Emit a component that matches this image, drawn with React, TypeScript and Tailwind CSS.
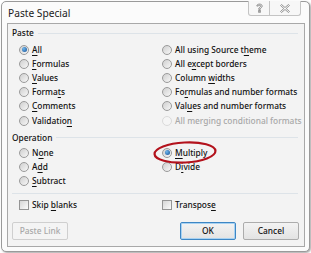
import React from 'react';

type Opt = { label: string; key: number; checked?: boolean; disabled?: boolean };

const pasteLeft: Opt[] = [
  { label: 'All', key: 0, checked: true },
  { label: 'Formulas', key: 0 },
  { label: 'Values', key: 0 },
  { label: 'Formats', key: 5 },
  { label: 'Comments', key: 0 },
  { label: 'Validation', key: 9 },
];

const pasteRight: Opt[] = [
  { label: 'All using Source theme', key: 18 },
  { label: 'All except borders', key: 5 },
  { label: 'Column widths', key: 7 },
  { label: 'Formulas and number formats', key: 2 },
  { label: 'Values and number formats', key: 3 },
  { label: 'All merging conditional formats', key: -1, disabled: true },
];

const opLeft: Opt[] = [
  { label: 'None', key: 1 },
  { label: 'Add', key: 1 },
  { label: 'Subtract', key: 0 },
];

const opRight: Opt[] = [
  { label: 'Multiply', key: 0, checked: true },
  { label: 'Divide', key: 1 },
];

function Label({ text, k }: { text: string; k: number }) {
  if (k < 0) return <span className="whitespace-nowrap">{text}</span>;
  return (
    <span className="whitespace-nowrap">
      {text.slice(0, k)}
      <span className="underline underline-offset-[2px]">{text[k]}</span>
      {text.slice(k + 1)}
    </span>
  );
}

function Radio({ checked, disabled }: { checked?: boolean; disabled?: boolean }) {
  return (
    <span
      className={
        disabled
          ? 'flex h-[10px] w-[10px] shrink-0 items-center justify-center rounded-full border border-[#dadada] bg-[#f5f5f5]'
          : 'flex h-[10px] w-[10px] shrink-0 items-center justify-center rounded-full border border-[#9a9a9a] bg-gradient-to-br from-[#cfcfcf] to-[#f7f7f7]'
      }
    >
      {checked && (
        <span className="h-[5px] w-[5px] rounded-full bg-[radial-gradient(circle_at_35%_35%,#6fb6ec,#134f95)]" />
      )}
    </span>
  );
}

function RadioRow({ opt, h = 'h-[14.2px]' }: { opt: Opt; h?: string }) {
  return (
    <div className={`flex items-center gap-[3px] ${h} ${opt.disabled ? 'text-[#a8a8a8]' : 'text-[#111]'}`}>
      <Radio checked={opt.checked} disabled={opt.disabled} />
      <Label text={opt.label} k={opt.key} />
    </div>
  );
}

function Check({ label, k }: { label: string; k: number }) {
  return (
    <div className="flex h-[14px] items-center gap-[3px]">
      <span className="h-[10px] w-[10px] shrink-0 border border-[#959595] bg-gradient-to-br from-[#d6d6d6] to-[#fbfbfb]" />
      <Label text={label} k={k} />
    </div>
  );
}

function GroupHeader({ title }: { title: string }) {
  return (
    <div className="flex h-[16px] items-center gap-[4px] pl-[4px] pr-[6px]">
      <span>{title}</span>
      <span className="h-px flex-1 bg-[#dde3e8]" />
    </div>
  );
}

export default function App() {
  return (
    <div className="relative h-[253px] w-[311px] bg-white text-[8.35px] font-medium leading-[14px] text-[#111] [font-family:'Noto_Sans','Open_Sans',sans-serif]">
      <div className="absolute left-[1px] top-[1px] flex h-[251px] w-[309px] flex-col rounded-[5px] border border-[#9a9a9a] bg-[#fbfbfb] pb-[4px] pl-[5px] pr-[4px] shadow-[1px_1px_2px_rgba(0,0,0,0.35)]">
        {/* title bar */}
        <div className="relative flex h-[21px] shrink-0 items-center pl-[1px] text-[10.2px] font-normal">
          <span className="text-[#222]">Paste Special</span>
          <div className="absolute right-[4px] top-[-1px] flex h-[15px] rounded-b-[3px] border border-t-0 border-[#c4c4c4] bg-[#f7f7f7]">
            <div className="flex w-[21px] items-center justify-center border-r border-[#c4c4c4]">
              <svg width="7" height="10" viewBox="0 0 7 10" fill="none" stroke="#8a8a8a" strokeWidth="1">
                <path d="M0.8 3 C0.8 0.5 6.2 0.5 6.2 3 C6.2 4.6 4.3 4.7 4.3 6.3 L2.7 6.3 C2.7 4.3 4.6 4.2 4.6 3 C4.6 2 2.4 2 2.4 3 Z" />
                <rect x="2.7" y="7.6" width="1.6" height="1.6" />
              </svg>
            </div>
            <div className="flex w-[30px] items-center justify-center">
              <svg width="10" height="9" viewBox="0 0 10 9" fill="none" stroke="#8a8a8a" strokeWidth="0.9">
                <path d="M0.5 1.5 L1.5 0.5 L5 3.5 L8.5 0.5 L9.5 1.5 L6.2 4.5 L9.5 7.5 L8.5 8.5 L5 5.5 L1.5 8.5 L0.5 7.5 L3.8 4.5 Z" />
              </svg>
            </div>
          </div>
        </div>

        {/* client area */}
        <div className="relative flex flex-1 flex-col border border-[#a8a8a8] bg-[#f3f3f3] pt-[1px]">
          <GroupHeader title="Paste" />
          <div className="mt-[1.5px] grid grid-cols-[143px_1fr] pl-[11px]">
            <div className="flex flex-col">
              {pasteLeft.map((o) => (
                <RadioRow key={o.label} opt={o} />
              ))}
            </div>
            <div className="flex flex-col">
              {pasteRight.map((o) => (
                <RadioRow key={o.label} opt={o} />
              ))}
            </div>
          </div>

          <div className="mt-[2.3px]">
            <GroupHeader title="Operation" />
          </div>
          <div className="grid grid-cols-[143px_1fr] pl-[11px]">
            <div className="flex flex-col">
              {opLeft.map((o) => (
                <RadioRow key={o.label} opt={o} h="h-[14px]" />
              ))}
            </div>
            <div className="flex flex-col">
              {opRight.map((o) => (
                <RadioRow key={o.label} opt={o} h="h-[14px]" />
              ))}
            </div>
          </div>

          <div className="ml-[4px] mr-[6px] mt-[5px] h-px bg-[#dde3e8]" />

          <div className="mt-[4px] grid grid-cols-[143px_1fr] pl-[11px]">
            <Check label="Skip blanks" k={5} />
            <Check label="Transpose" k={8} />
          </div>

          <div className="mt-[10px] flex items-center pl-[4px] pr-[5px]">
            <button className="h-[18px] w-[56px] rounded-[2px] border border-[#cfcfcf] bg-[#f4f4f4] text-[8.35px] font-medium text-[#a8a8a8]">
              Paste Link
            </button>
            <div className="ml-auto flex gap-[7px]">
              <button className="h-[18px] w-[56px] rounded-[2px] border border-[#3d86c4] bg-gradient-to-b from-[#f3f3f3] to-[#e3e3e3] text-[8.35px] font-medium text-[#111] shadow-[inset_0_0_0_1px_#a8d2f2]">
                OK
              </button>
              <button className="h-[18px] w-[56px] rounded-[2px] border border-[#acacac] bg-gradient-to-b from-[#f3f3f3] to-[#e3e3e3] text-[8.35px] font-medium text-[#111]">
                Cancel
              </button>
            </div>
          </div>
        </div>
      </div>

      {/* red highlight ellipse */}
      <svg className="pointer-events-none absolute left-[152px] top-[140px]" width="66" height="25" viewBox="0 0 66 25">
        <ellipse cx="33" cy="12.5" rx="30.5" ry="10" fill="none" stroke="#b3121c" strokeWidth="2.2" transform="rotate(-3 33 12.5)" />
      </svg>
    </div>
  );
}
